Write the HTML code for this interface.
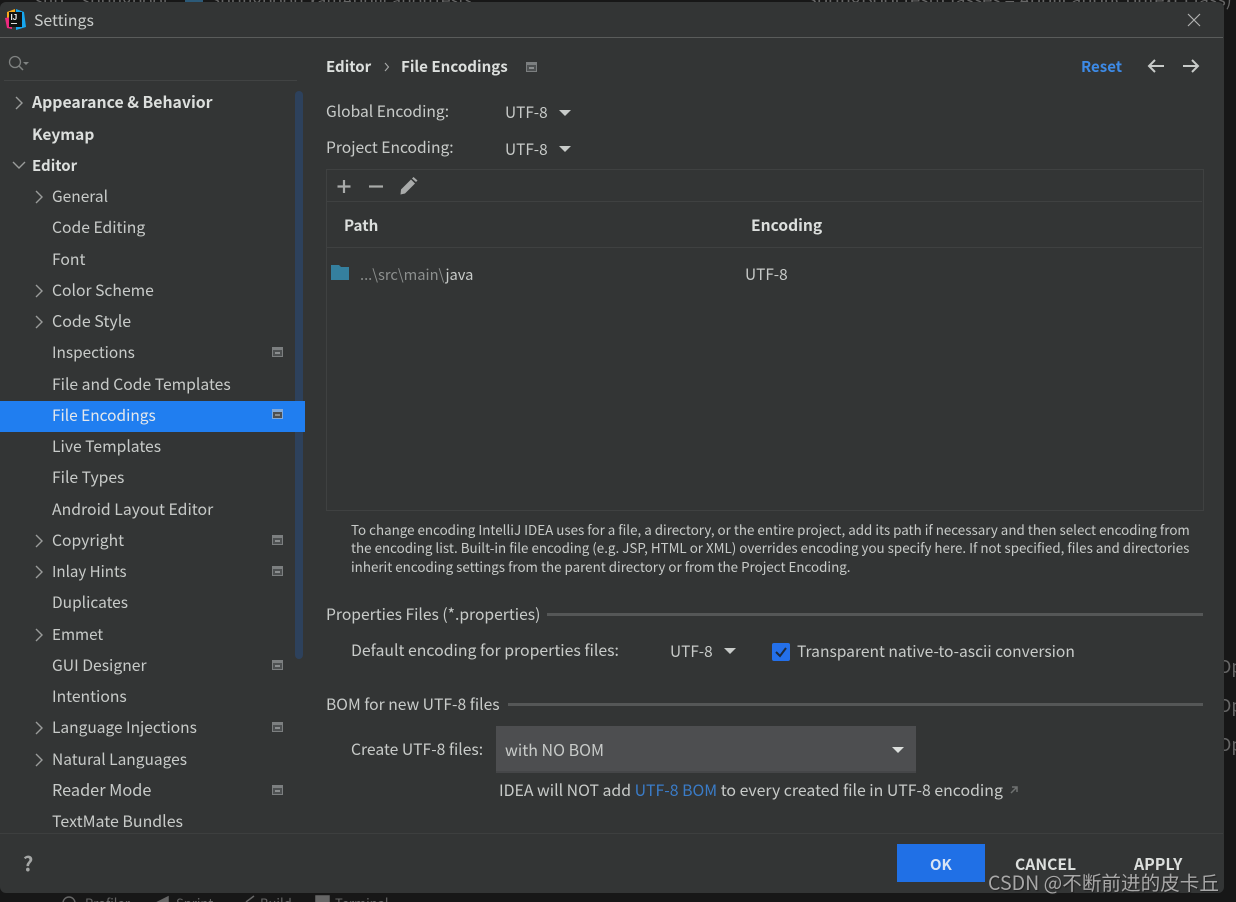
<!DOCTYPE html>
<html lang="en">
<head>
<meta charset="utf-8">
<title>Settings</title>
<style>
html,body{margin:0;padding:0;background:#171717;width:1236px;height:902px;overflow:hidden;}
#root{position:relative;width:1236px;height:902px;overflow:hidden;font-family:"Noto Sans CJK SC","Liberation Sans",sans-serif;color:#c8cbc9;font-size:15.7px;}
.t{position:absolute;white-space:nowrap;line-height:20px;height:20px;}
.b{font-weight:700;color:#dcdfdd;}
#dlg{position:absolute;left:0;top:2px;width:1224px;height:891px;background:#333535;border-radius:6px;}
.abs{position:absolute;}
.ic{position:absolute;width:11px;height:10px;background:#7c7f80;}
.ic:after{content:"";position:absolute;left:1px;top:3px;width:9px;height:6px;background:#4d5051;}
.ic:before{content:"";position:absolute;z-index:1;left:3px;top:5px;width:5px;height:2px;background:#8a8d8e;}
.tri{position:absolute;width:0;height:0;border-left:6px solid transparent;border-right:6px solid transparent;border-top:6px solid #c8cbc9;}
.bar{position:absolute;height:3px;background:#555757;}
.bg{color:#666;}
</style>
</head>
<body>
<div id="root">
<div class="t bg" style="left:35px;top:-11px;font-size:17px;">sub</div>
<div class="t bg" style="left:82px;top:-11px;font-size:17px;">springboot</div>
<div class="abs" style="left:185px;top:0;width:18px;height:2px;background:#2c5a78;"></div>
<div class="t bg" style="left:210px;top:-11px;font-size:17px;">SpringbootExamApplicationTests</div>
<div class="t bg" style="left:806px;top:-11px;font-size:18px;">SpringBootTest(classes = ApplicationContext.class)</div>
<div class="t bg" style="left:1218px;top:656px;font-size:18px;">Op</div>
<div class="t bg" style="left:1218px;top:695px;font-size:18px;">Op</div>
<div class="t bg" style="left:1218px;top:734px;font-size:18px;">Op</div>
<svg class="abs" style="left:60px;top:894px;" width="280" height="8" viewBox="0 0 280 8" fill="none" stroke="#666" stroke-width="1.500"><circle cx="9" cy="9" r="6"/><path d="M96 9l12-6v6z" fill="#666"/><path d="M186 8l8-6"/><rect x="256" y="2" width="13" height="10" fill="#666"/></svg>
<div class="t bg" style="left:85px;top:893px;font-size:13px;">Profiler</div>
<div class="t bg" style="left:176px;top:893px;font-size:13px;">Sprint</div>
<div class="t bg" style="left:260px;top:893px;font-size:13px;">Build</div>
<div class="t bg" style="left:335px;top:893px;font-size:13px;">Terminal</div>

<div id="dlg"></div>

<!-- logo -->
<svg class="abs" style="left:5px;top:9px;" width="21" height="22" viewBox="0 0 21 22">
<path d="M2 3 L10 0 L10 10 L2 10 Z" fill="#f7a81b"/>
<path d="M0 9 L7 8 L7 20 L2 19 Z" fill="#ec2a7e"/>
<path d="M11 0 L19 3 L21 18 L11 21 Z" fill="#16a6ee"/>
<rect x="4" y="3" width="13" height="15" fill="#111"/>
<rect x="6" y="14" width="6" height="1" fill="#ddd"/>
<text x="5.5" y="11" font-family="Liberation Sans,sans-serif" font-size="8" font-weight="700" fill="#eee">IJ</text>
</svg>
<div class="t" style="left:34px;top:10px;font-size:15.8px;">Settings</div>
<svg class="abs" style="left:1187px;top:13px;" width="14" height="14" viewBox="0 0 14 14"><path d="M1 1L13 13M13 1L1 13" stroke="#b0b2b1" stroke-width="1.2" fill="none"/></svg>
<div class="abs" style="left:0;top:37px;width:1223px;height:1px;background:#5a5c5b;"></div>

<!-- search -->
<svg class="abs" style="left:8px;top:55px;" width="22" height="18" viewBox="0 0 22 18"><circle cx="7" cy="7" r="5.5" stroke="#7f8281" stroke-width="1.3" fill="none"/><path d="M11 11L15 15" stroke="#7f8281" stroke-width="1.5"/><path d="M15 7h6l-3 3z" fill="#7f8281"/></svg>
<div class="abs" style="left:4px;top:80px;width:293px;height:1px;background:#414343;"></div>

<!-- scrollbar -->
<div class="abs" style="left:295px;top:91px;width:8px;height:568px;background:#2d415c;border-radius:4px;"></div>
<!-- selected -->
<div class="abs" style="left:0;top:401px;width:305px;height:31px;background:#207ef0;"></div>

<!-- tree -->
<div class="t b" style="left:32px;top:92px;font-size:15.8px;">Appearance &amp; Behavior</div>
<div class="t b" style="left:32px;top:124px;font-size:15.5px;">Keymap</div>
<div class="t b" style="left:32px;top:156px;font-size:15px;">Editor</div>
<div class="t" style="left:52px;top:186px;font-size:15.5px;">General</div>
<div class="t" style="left:52px;top:217px;">Code Editing</div>
<div class="t" style="left:52px;top:249px;">Font</div>
<div class="t" style="left:52px;top:280px;">Color Scheme</div>
<div class="t" style="left:52px;top:310px;font-size:16px;">Code Style</div>
<div class="t" style="left:52px;top:342px;font-size:15.4px;">Inspections</div>
<div class="t" style="left:52px;top:374px;">File and Code Templates</div>
<div class="t" style="left:52px;top:405px;color:#e4e8ec;font-size:15.45px;">File Encodings</div>
<div class="t" style="left:52px;top:436px;">Live Templates</div>
<div class="t" style="left:52px;top:467px;">File Types</div>
<div class="t" style="left:52px;top:499px;font-size:15.8px;">Android Layout Editor</div>
<div class="t" style="left:52px;top:530px;">Copyright</div>
<div class="t" style="left:52px;top:561px;font-size:15.1px;">Inlay Hints</div>
<div class="t" style="left:52px;top:592px;font-size:15.5px;">Duplicates</div>
<div class="t" style="left:52px;top:624px;font-size:15.2px;">Emmet</div>
<div class="t" style="left:52px;top:655px;">GUI Designer</div>
<div class="t" style="left:52px;top:686px;">Intentions</div>
<div class="t" style="left:52px;top:717px;font-size:15.5px;">Language Injections</div>
<div class="t" style="left:52px;top:749px;font-size:15.5px;">Natural Languages</div>
<div class="t" style="left:52px;top:779px;font-size:16.3px;">Reader Mode</div>
<div class="t" style="left:52px;top:810px;font-size:15.95px;">TextMate Bundles</div>

<!-- chevrons -->
<svg class="abs" style="left:0;top:0;" width="60" height="780" viewBox="0 0 60 780" fill="none" stroke="#9a9c9b" stroke-width="1.4">
<path d="M16 97l6 6-6 6"/>
<path d="M13 162l6 6 6-6"/>
<path d="M36 191l6 6-6 6"/>
<path d="M36 285l6 6-6 6"/>
<path d="M36 316l6 6-6 6"/>
<path d="M36 535l6 6-6 6"/>
<path d="M36 566l6 6-6 6"/>
<path d="M36 629l6 6-6 6"/>
<path d="M36 722l6 6-6 6"/>
<path d="M36 754l6 6-6 6"/>
</svg>

<!-- project icons -->
<div class="ic" style="left:272px;top:347px;"></div>
<div class="ic" style="left:272px;top:409px;background:#82a9d8;"></div>
<div class="ic" style="left:272px;top:535px;"></div>
<div class="ic" style="left:272px;top:566px;"></div>
<div class="ic" style="left:272px;top:660px;"></div>
<div class="ic" style="left:272px;top:722px;"></div>
<div class="ic" style="left:272px;top:785px;"></div>

<!-- header -->
<div class="t b" style="left:326px;top:57px;font-size:15px;">Editor</div>
<svg class="abs" style="left:384px;top:62px;" width="6" height="10" viewBox="0 0 6 10"><path d="M1 1l3.5 4L1 9" stroke="#a8aaa9" stroke-width="1.1" fill="none"/></svg>
<div class="t b" style="left:401px;top:56px;font-size:15.1px;">File Encodings</div>
<div class="ic" style="left:526px;top:62px;"></div>
<div class="t" style="left:1081px;top:57px;color:#3d8ae6;font-weight:700;font-size:15px;">Reset</div>
<svg class="abs" style="left:1147px;top:57px;" width="54" height="18" viewBox="0 0 54 18" fill="none" stroke="#c8cbc9" stroke-width="2"><path d="M17 9H2M8 3L2 9l6 6"/><path d="M36 9h15M45 3l6 6-6 6"/></svg>

<!-- encodings -->
<div class="t" style="left:326px;top:101px;font-size:15.6px;">Global Encoding:</div>
<div class="t" style="left:505px;top:102px;font-size:15.4px;">UTF-8</div>
<div class="tri" style="left:559px;top:110px;"></div>
<div class="t" style="left:326px;top:137px;font-size:15.6px;">Project Encoding:</div>
<div class="t" style="left:505px;top:139px;font-size:15.4px;">UTF-8</div>
<div class="tri" style="left:559px;top:146px;"></div>

<!-- table -->
<div class="abs" style="left:326px;top:169px;width:876px;height:340px;border:1px solid #3f4141;"></div>
<div class="abs" style="left:327px;top:201px;width:875px;height:1px;background:#3f4141;"></div>
<div class="abs" style="left:327px;top:247px;width:875px;height:1px;background:#3f4141;"></div>
<svg class="abs" style="left:336px;top:176px;" width="84" height="20" viewBox="0 0 84 20">
<path d="M8 4v13M1.500 10.500h13" stroke="#a9abaa" stroke-width="2.200" fill="none"/>
<path d="M33 10.500h14" stroke="#a9abaa" stroke-width="2.200" fill="none"/>
<path d="M65 13.500 L75 3.500 L79 7.500 L69 17.500 L64.500 18.500 Z M76 2.500 L77.500 1 L81.500 4.500 L80 6 Z" fill="#a9abaa"/>
</svg>
<div class="t b" style="left:344px;top:215px;font-size:15.2px;">Path</div>
<div class="t b" style="left:751px;top:215px;font-size:15.6px;">Encoding</div>
<svg class="abs" style="left:331px;top:265px;" width="18" height="15" viewBox="0 0 18 15"><path d="M0 0h8l2 2h8v13H0z" fill="#35809f"/></svg>
<div class="t" style="left:360px;top:265px;font-size:14.7px;"><span style="color:#8d908f;">...\src\main\</span><span>java</span></div>
<div class="t" style="left:745px;top:264px;font-size:15.4px;">UTF-8</div>

<!-- description -->
<div class="t" style="left:351px;top:519px;font-size:13.38px;">To change encoding IntelliJ IDEA uses for a file, a directory, or the entire project, add its path if necessary and then select encoding from</div>
<div class="t" style="left:351px;top:537px;font-size:13.38px;">the encoding list. Built-in file encoding (e.g. JSP, HTML or XML) overrides encoding you specify here. If not specified, files and directories</div>
<div class="t" style="left:351px;top:556px;font-size:13.38px;">inherit encoding settings from the parent directory or from the Project Encoding.</div>

<!-- properties -->
<div class="t" style="left:326px;top:604px;font-size:15.66px;">Properties Files (*.properties)</div>
<div class="bar" style="left:547px;top:613px;width:656px;"></div>
<div class="t" style="left:351px;top:640px;font-size:15.83px;">Default encoding for properties files:</div>
<div class="t" style="left:670px;top:641px;font-size:15.4px;">UTF-8</div>
<div class="tri" style="left:724px;top:648px;"></div>
<div class="abs" style="left:772px;top:643px;width:18px;height:18px;background:#2470ea;border-radius:2px;"></div>
<svg class="abs" style="left:772px;top:643px;" width="18" height="18" viewBox="0 0 18 18"><path d="M4 9l4 4 6-8" stroke="#1d2a3c" stroke-width="2" fill="none"/></svg>
<div class="t" style="left:797px;top:641px;font-size:15.6px;">Transparent native-to-ascii conversion</div>

<!-- BOM -->
<div class="t" style="left:326px;top:694px;">BOM for new UTF-8 files</div>
<div class="bar" style="left:508px;top:703px;width:695px;"></div>
<div class="t" style="left:351px;top:739px;">Create UTF-8 files:</div>
<div class="abs" style="left:496px;top:726px;width:420px;height:47px;background:#4d4e50;"></div>
<div class="abs" style="left:496px;top:771px;width:420px;height:2px;background:#454648;"></div>
<div class="t" style="left:505px;top:739px;font-size:16px;">with NO BOM</div>
<div class="tri" style="left:892px;top:747px;border-top-color:#dcdfdd;"></div>
<div class="t" style="left:499px;top:780px;font-size:15.85px;">IDEA will NOT add <span style="color:#3a7cc8;">UTF-8 BOM</span> to every created file in UTF-8 encoding</div>
<svg class="abs" style="left:1009px;top:785px;" width="10" height="10" viewBox="0 0 10 10"><path d="M2 8L8 2M3 2h5v5" stroke="#6f7271" stroke-width="1.500" fill="none"/></svg>

<!-- footer -->
<div class="abs" style="left:0;top:833px;width:1223px;height:1px;background:#3d3f3f;"></div>
<div class="t" style="left:23px;top:853px;color:#a5a7a6;font-weight:700;font-size:20px;">?</div>
<div class="abs" style="left:897px;top:844px;width:88px;height:38px;background:#2070e6;"></div>
<div class="t b" style="left:930px;top:855px;color:#d8e4f4;font-size:15px;">OK</div>
<div class="t b" style="left:1015px;top:854px;">CANCEL</div>
<div class="t b" style="left:1134px;top:854px;font-size:15.9px;">APPLY</div>
<div class="t" style="left:988px;top:872px;font-size:19.6px;color:#a8a8a8;text-shadow:1px 1px 1px #222;">CSDN @不断前进的皮卡丘</div>
</div>
</body>
</html>
